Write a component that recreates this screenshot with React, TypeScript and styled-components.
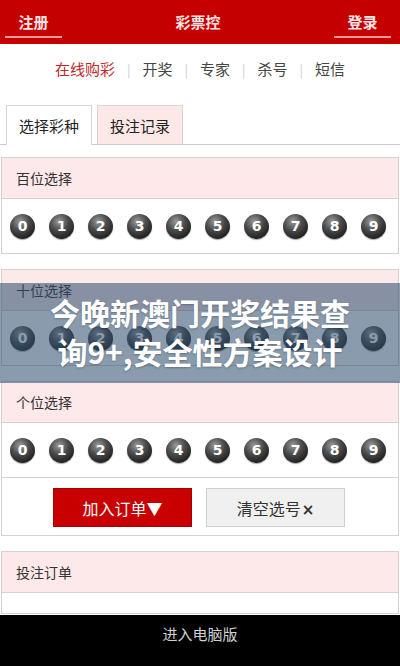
import styled, { createGlobalStyle } from 'styled-components';

const GlobalStyle = createGlobalStyle`
    html, body {
        margin: 0;
        padding: 0;
        background: #fff;
    }
    body {
        font-family: "Noto Sans CJK SC", "Noto Sans", "Liberation Sans", sans-serif;
        color: #333;
    }
`;

const digits = [0, 1, 2, 3, 4, 5, 6, 7, 8, 9];
const navItems = ['在线购彩', '开奖', '专家', '杀号', '短信'];

const Page = styled.div`
    position: relative;
    width: 400px;
    height: 666px;
    overflow: hidden;
    display: flex;
    flex-direction: column;
`;

const Header = styled.header`
    height: 44px;
    flex-shrink: 0;
    background: #c40000;
    display: flex;
    align-items: flex-end;
    justify-content: space-between;
    padding: 0 9px 6px 5px;
    box-sizing: border-box;
`;

const HeaderLink = styled.a`
    width: 57px;
    display: block;
    text-align: center;
    color: #fde4e4;
    font-size: 15px;
    font-weight: bold;
    line-height: 20px;
    padding-bottom: 4px;
    border-bottom: 2px solid #f19a9a;
`;

const HeaderTitle = styled.div`
    color: #fde4e4;
    font-size: 15px;
    font-weight: bold;
    line-height: 20px;
    padding-bottom: 6px;
`;

const Nav = styled.nav`
    height: 52px;
    flex-shrink: 0;
    display: flex;
    align-items: center;
    justify-content: center;
    padding-bottom: 4px;
    box-sizing: border-box;
    font-size: 15px;
`;

const NavItem = styled.span<{ $active?: boolean }>`
    color: ${(p) => (p.$active ? '#c0272d' : '#444')};
`;

const NavSep = styled.span`
    color: #ccc;
    margin: 0 12px;
    font-size: 13px;
`;

const Tabs = styled.div`
    margin-top: 9px;
    display: flex;
    gap: 5px;
    padding-left: 6px;
    border-bottom: 1px solid #ccc;
`;

const Tab = styled.div<{ $active?: boolean }>`
    width: 86px;
    box-sizing: border-box;
    display: flex;
    align-items: center;
    justify-content: center;
    font-size: 15px;
    color: #222;
    border: 1px solid #d6d6d6;
    border-bottom: none;
    background: ${(p) => (p.$active ? '#fff' : '#fde8e8')};
    margin-bottom: ${(p) => (p.$active ? '-1px' : '0')};
    height: ${(p) => (p.$active ? '40px' : '39px')};
`;

const Section = styled.section<{ $gap?: number }>`
    margin: ${(p) => p.$gap ?? 15}px 1px 0;
    border: 1px solid #d2d2d2;
    flex-shrink: 0;
`;

const SectionHead = styled.div`
    height: 40px;
    background: #fde9e9;
    border-bottom: 1px solid #d2d2d2;
    display: flex;
    align-items: center;
    padding-left: 14px;
    font-size: 14px;
    color: #333;
`;

const BallRow = styled.div`
    height: 54px;
    display: flex;
    align-items: center;
    padding-left: 8px;
    gap: 14px;
`;

const Ball = styled.span`
    width: 25px;
    height: 25px;
    border-radius: 50%;
    flex-shrink: 0;
    display: flex;
    align-items: center;
    justify-content: center;
    background: radial-gradient(circle at 40% 30%, #9a9a9a 0%, #4a4a4a 40%, #1c1c1c 80%, #111 100%);
    box-shadow: 0 1px 1px rgba(0, 0, 0, 0.35);
    color: #fff;
    font-family: "DejaVu Sans", "Liberation Sans", sans-serif;
    font-weight: bold;
    font-size: 14px;
`;

const ActionRow = styled.div`
    height: 58px;
    border-top: 1px solid #d2d2d2;
    display: flex;
    align-items: center;
    justify-content: center;
    gap: 14px;
    padding: 2px 2px 0 0;
    box-sizing: border-box;
`;

const ActionButton = styled.button<{ $primary?: boolean }>`
    width: 139px;
    height: 39px;
    border: 1px solid ${(p) => (p.$primary ? '#a80000' : '#cfcfcf')};
    background: ${(p) => (p.$primary ? '#c80000' : '#f0f0f0')};
    color: ${(p) => (p.$primary ? '#fff' : '#333')};
    font-family: inherit;
    font-size: 16px;
    padding: 0;
`;

const CloseMark = styled.span`
    font-family: "DejaVu Sans", sans-serif;
    font-weight: bold;
    font-size: 15px;
    margin-left: 1px;
`;

const BlankRow = styled.div`
    height: 20px;
`;

const Footer = styled.footer`
    margin-top: 1px;
    flex: 1;
    background: #000;
    color: #d0d0d0;
    font-size: 15px;
    display: flex;
    justify-content: center;
    padding-top: 8px;
`;

const Banner = styled.div`
    position: absolute;
    left: 0;
    right: 0;
    top: 283px;
    height: 100px;
    box-sizing: border-box;
    padding-top: 10px;
    background: rgba(44, 76, 108, 0.56);
    display: flex;
    flex-direction: column;
    align-items: center;
    color: #fff;
    font-size: 30px;
    font-weight: bold;
    line-height: 39px;
    text-shadow: 0 1px 2px rgba(0, 0, 0, 0.25);
`;

const BallPicker = ({ title, gap }: { title: string; gap?: number }) => (
    <Section $gap={gap}>
        <SectionHead>{title}</SectionHead>
        <BallRow>
            {digits.map((d) => (
                <Ball key={d}>{d}</Ball>
            ))}
        </BallRow>
    </Section>
);

export default function App() {
    return (
        <>
            <GlobalStyle />
            <Page>
                <Header>
                    <HeaderLink>注册</HeaderLink>
                    <HeaderTitle>彩票控</HeaderTitle>
                    <HeaderLink>登录</HeaderLink>
                </Header>
                <Nav>
                    {navItems.map((item, i) => (
                        <span key={item}>
                            {i > 0 && <NavSep>|</NavSep>}
                            <NavItem $active={i === 0}>{item}</NavItem>
                        </span>
                    ))}
                </Nav>
                <Tabs>
                    <Tab $active>选择彩种</Tab>
                    <Tab>投注记录</Tab>
                </Tabs>
                <BallPicker title="百位选择" gap={12} />
                <BallPicker title="十位选择" />
                <Section>
                    <SectionHead>个位选择</SectionHead>
                    <BallRow>
                        {digits.map((d) => (
                            <Ball key={d}>{d}</Ball>
                        ))}
                    </BallRow>
                    <ActionRow>
                        <ActionButton $primary>加入订单▼</ActionButton>
                        <ActionButton>
                            清空选号<CloseMark>×</CloseMark>
                        </ActionButton>
                    </ActionRow>
                </Section>
                <Section>
                    <SectionHead>投注订单</SectionHead>
                    <BlankRow />
                </Section>
                <Footer>进入电脑版</Footer>
                <Banner>
                    <div>今晚新澳门开奖结果查</div>
                    <div>询9+,安全性方案设计</div>
                </Banner>
            </Page>
        </>
    );
}
